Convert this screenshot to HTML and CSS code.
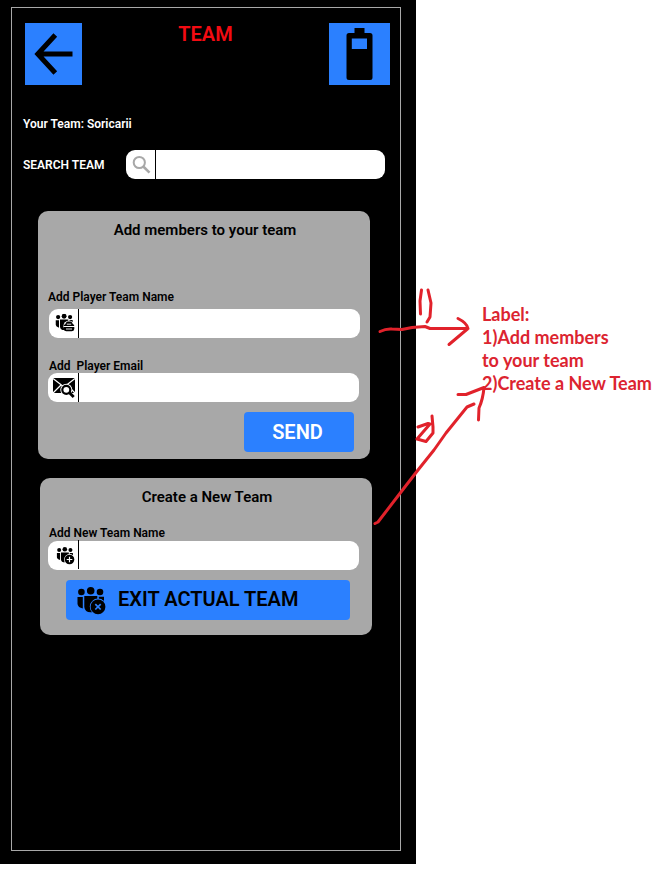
FILE: index.html
```html
<!DOCTYPE html>
<html lang="en">
<head>
<meta charset="utf-8">
<title>Team</title>
<link rel="stylesheet" href="styles.css">
</head>
<body>
<svg class="defs" width="0" height="0" aria-hidden="true">
  <symbol id="group" viewBox="0 0 28 27">
    <circle cx="4.4" cy="5" r="3.3"/><circle cx="13.7" cy="3.8" r="3.8"/><circle cx="23" cy="5" r="3.3"/>
    <path d="M.5 10H5.800V21.500Q1 20.500 .5 17ZM7.300 9H20.300V12.500Q14.500 14 14.500 19.500Q14.500 23 16.500 25Q8 26.500 7.300 20ZM21.800 9.800H27V14Q24.500 12 21.800 12Z"/>
  </symbol>
</svg>
<div class="page">
  <main class="phone">
    <div class="screen">
      <header class="topbar">
        <button class="tile tile-back" aria-label="Back">
          <svg width="57" height="62" viewBox="0 0 57 62"><path d="M47.500 31H13M30.300 12L12.800 31L30.300 50" fill="none" stroke="#000" stroke-width="5"/></svg>
        </button>
        <h1>TEAM</h1>
        <div class="tile tile-battery">
          <svg width="61" height="62" viewBox="0 0 61 62"><path d="M25.500 5H35.500V10H41Q43.500 10 43.500 12.500V54.500Q43.500 57 41 57H20Q17.500 57 17.500 54.500V12.500Q17.500 10 20 10H25.500Z"/><path d="M22.800 15.500H38V26H22.800Z" fill="#2b80ff"/></svg>
        </div>
      </header>
      <p class="current">Your Team: Soricarii</p>
      <div class="search">
        <span>SEARCH TEAM</span>
        <div class="field field-search">
          <div class="lead"><svg width="29" height="29" viewBox="0 0 29 29"><g fill="none" stroke="#a8a8a8"><circle cx="13.300" cy="12.500" r="5.600" stroke-width="2"/><path d="M17.300 16.500L23.500 22.700" stroke-width="2.500"/></g></svg></div>
        </div>
      </div>

      <section class="card card-add">
        <h2>Add members to your team</h2>
        <label class="label-player">Add Player Team Name</label>
        <div class="field field-player">
          <div class="lead"><svg width="29" height="29" viewBox="0 0 29 29"><use href="#group" x="6.300" y="4.800" width="18" height="17.400"/><circle cx="20" cy="17.200" r="5.600" fill="#fff"/><path d="M14.700 17Q15 15.600 16.200 15.300L17.200 13.500Q17.700 12.500 18.700 12.500H21.700Q22.600 12.500 23 13.500L24 15.300Q25.200 15.600 25.300 17ZM14.700 18H25.300V20Q25 22.200 22.700 22.200H17.300Q15 22.200 14.700 20Z"/><path d="M17.800 15.200H22.200M17 20H23" stroke="#fff" stroke-width=".9"/></svg></div>
        </div>
        <label class="label-email">Add&nbsp; Player Email</label>
        <div class="field">
          <div class="lead"><svg width="30" height="29" viewBox="0 0 30 29"><path d="M5 5H27V20H5Z"/><path d="M5 5.500L16 14L27 5.500M5 20L13 12M27 20L19 12" fill="none" stroke="#fff" stroke-width="1.200"/><circle cx="18.300" cy="16.800" r="6" fill="#fff"/><circle cx="18.300" cy="16.800" r="4" fill="#fff" stroke="#000" stroke-width="2.200"/><path d="M21.500 19.800L25.700 24" stroke="#000" stroke-width="2.900"/></svg></div>
        </div>
        <button class="btn btn-send">SEND</button>
      </section>

      <section class="card card-new">
        <h2>Create a New Team</h2>
        <label class="label-new">Add New Team Name</label>
        <div class="field">
          <div class="lead lead-up"><svg width="30" height="29" viewBox="0 0 30 29"><use href="#group" x="8.500" y="7" width="17" height="16.400"/><circle cx="21.500" cy="19.500" r="5.400" fill="#fff"/><circle cx="21.500" cy="19.500" r="4.800"/><path d="M18.700 19.500H24.300M21.500 16.700V22.300" stroke="#fff" stroke-width="1.200"/></svg></div>
        </div>
        <button class="btn btn-exit">
          <svg width="30" height="29" viewBox="0 0 30 29"><use href="#group" x="0" y="1" width="28" height="27"/><circle cx="21" cy="20.800" r="8.200" fill="#2b80ff"/><circle cx="21" cy="20.800" r="7.400"/><path d="M18.300 18.100L23.700 23.500M23.700 18.100L18.300 23.500" stroke="#2b80ff" stroke-width="1.700"/></svg>
          <span>EXIT ACTUAL TEAM</span>
        </button>
      </section>
    </div>
  </main>
  <aside class="note">Label:<br>1)Add members<br>to your team<br>2)Create a New Team</aside>
  <svg class="ink" width="659" height="873" viewBox="0 0 659 873">
    <path d="M380 331.500Q386 328.500 392 329L402 329.500L412 327.500L425 326.500L430 328.500H468M458 318.500Q467 323 468 328.500L449 344.500M421.500 290L420 301L420.500 314M428 290L431 303L430 317L427 322"/>
    <path d="M375 523.500L378 522L401 492L418 470L434 450L446 433L467 407L474 404M458 394.500L466 394.500L484 387.500Q483 399 479 408L478.500 420M418 427L428 423.500L430 424L417 439L426 441.500L433 433V427L432 416"/>
  </svg>
</div>
</body>
</html>
```
FILE: styles.css
```css
* { box-sizing: border-box; }
body { margin: 0; background: #fff; font-family: Roboto, sans-serif; font-weight: 600; }
h1, h2, p { margin: 0; font-weight: 600; }
button { border: 0; padding: 0; font: inherit; color: inherit; }
svg { display: block; }
.defs { position: absolute; }
.page { position: relative; display: flex; width: 659px; height: 873px; overflow: hidden; }
.phone { flex: none; width: 416px; height: 864px; padding: 7px 15px 13px 11px; background: #000; }
.screen { height: 844px; border: 1px solid #a8a8a8; }
.topbar { display: flex; justify-content: space-between; align-items: flex-start; padding: 15px 10px 0 13px; }
.tile { height: 62px; background: #2b80ff; }
.tile-back { width: 57px; }
.tile-battery { width: 61px; }
h1 { margin-top: -1px; color: #f30b12; font-size: 20px; line-height: 24px; }
.current { margin: 31px 0 0 11px; color: #fff; font-size: 12px; line-height: 16px; }
.search { display: flex; align-items: center; justify-content: space-between; margin-top: 18px; padding: 0 15px 0 11px; color: #fff; font-size: 12px; }
.field { width: 311px; height: 29px; border-radius: 9px; background: #fff; }
.field-search { width: 259px; }
.lead { width: 31px; height: 29px; border-right: 1px solid #000; }
.field-search .lead, .field-player .lead { width: 30px; }
.lead-up { position: relative; top: -1px; }
.card { width: 332px; border-radius: 10px; background: #a8a8a8; color: #000; display: flex; flex-direction: column; align-items: flex-start; }
h2 { align-self: stretch; padding-left: 2px; text-align: center; font-size: 15px; line-height: 20px; }
label { font-size: 12px; line-height: 16px; }
.card-add { height: 248px; margin: 32px 0 0 26px; padding: 9px 10px 0; }
.card-new { height: 157px; margin: 19px 0 0 28px; padding: 9px 8px 0; }
.label-player { margin-top: 49px; }
.field-player { margin: 4px 0 0 1px; }
.label-email { margin: 20px 0 -1px 1px; }
.label-new { margin: 18px 0 0 1px; }
.btn { height: 40px; border-radius: 4px; background: #2b80ff; font-size: 20px; line-height: 38px; }
.btn-send { width: 110px; margin: 10px 0 0 196px; color: #fff; padding: 0 3px 1px 0; }
.btn-exit { width: 284px; margin: 10px 0 0 18px; padding-left: 11px; display: flex; align-items: center; gap: 11px; }
.btn-exit span { padding-bottom: 2px; }
.note { margin: 303px 0 0 66px; color: #dc2430; font: 700 18px/23px Lato, sans-serif; white-space: nowrap; }
.ink { position: absolute; inset: 0; pointer-events: none; fill: none; stroke: #e1222b; stroke-width: 3; stroke-linecap: round; stroke-linejoin: round; }
```
